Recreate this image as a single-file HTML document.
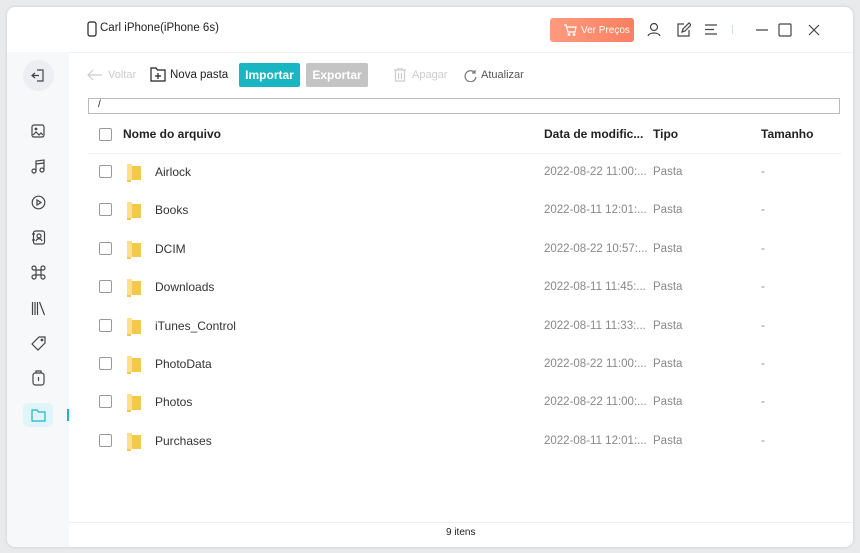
<!DOCTYPE html>
<html><head><meta charset="utf-8"><style>
*{margin:0;padding:0;box-sizing:border-box}
body{width:860px;height:553px;background:#e9eaec;font-family:"Liberation Sans",sans-serif;position:relative;overflow:hidden;color:#222}
.win{position:absolute;left:7px;top:7px;width:846px;height:540px;background:#fff;border-radius:8px;box-shadow:0 0 3px rgba(0,0,0,.15);overflow:hidden}
.side{position:absolute;left:0;top:45px;width:62px;height:495px;background:#f7f8fa}
.abs{position:absolute}
.t{position:absolute;white-space:nowrap}
.cb{position:absolute;width:13px;height:13px;border:1px solid #999;border-radius:2px;background:#fff}
.g{font-size:11.5px;color:#888}
svg{position:absolute;fill:none;stroke:#444;stroke-width:1.2}
</style></head><body>
<div class="win">
<div class="side"></div>
<svg style="left:80px;top:14px" width="10" height="16" viewBox="0 0 10 16"><rect x="1" y="1" width="8" height="14" rx="2" stroke="#222"/></svg>
<div class="t" style="left:93px;top:15px;font-size:11.5px">Carl iPhone(iPhone 6s)</div>
<div class="abs" style="left:543px;top:11px;width:84px;height:24px;border-radius:3px;background:linear-gradient(90deg,#ff9b7d,#fa7f62)"></div>
<svg style="left:556px;top:17px" width="14" height="12" viewBox="0 0 14 12"><path d="M1 1h2l2 7h7l1-5H4" stroke="#fff"/><circle cx="6" cy="10.5" r=".8" stroke="#fff"/><circle cx="11" cy="10.5" r=".8" stroke="#fff"/></svg>
<div class="t" style="left:574px;top:18px;font-size:10px;color:#fff">Ver Preços</div>
<svg style="left:640px;top:15px" width="14" height="15" viewBox="0 0 14 15"><circle cx="7" cy="5" r="3.5"/><path d="M1 14c1-4 11-4 12 0"/></svg>
<svg style="left:669px;top:15px" width="15" height="15" viewBox="0 0 15 15"><path d="M8 2H2v12h11V8M6 10l1-3 6-6 2 2-6 6z"/></svg>
<svg style="left:697px;top:17px" width="14" height="11" viewBox="0 0 14 11"><path d="M1 1h12M1 5.5h9M1 10h12"/></svg>
<div class="abs" style="left:725px;top:18px;width:1px;height:9px;background:#cde"></div>
<svg style="left:748px;top:17px" width="14" height="12" viewBox="0 0 14 12"><path d="M1 6h12"/></svg>
<svg style="left:771px;top:16px" width="14" height="14" viewBox="0 0 14 14"><rect x="1" y="1" width="12" height="12" rx="1"/></svg>
<svg style="left:801px;top:17px" width="12" height="12" viewBox="0 0 12 12"><path d="M1 1l10 10M11 1L1 11"/></svg>
<div class="abs" style="left:62px;top:45px;width:784px;height:1px;background:#f0f0f2"></div>
<div class="abs" style="left:16px;top:53px;width:31px;height:31px;border-radius:50%;background:#eceef2"></div>
<svg style="left:24px;top:61px" width="15" height="15" viewBox="0 0 15 15"><path d="M6 2h6v11H6M1 7.5h7M4 5l-3 2.5L4 10"/></svg>
<svg style="left:24px;top:117px" width="14" height="14" viewBox="0 0 14 14"><rect x="1" y="1" width="12" height="12" rx="2"/><path d="M2 11l3-3 3 3 2-2 2 2"/><circle cx="5" cy="5" r=".8"/></svg>
<svg style="left:24px;top:152px" width="14" height="15" viewBox="0 0 14 15"><path d="M5 12V2l8-1v10"/><circle cx="3" cy="12" r="2"/><circle cx="11" cy="11" r="2"/><path d="M5 5l8-1"/></svg>
<svg style="left:24px;top:188px" width="15" height="15" viewBox="0 0 15 15"><circle cx="7.5" cy="7.5" r="6.3"/><path d="M6 5v5l4-2.5z"/></svg>
<svg style="left:24px;top:223px" width="15" height="15" viewBox="0 0 15 15"><rect x="2.5" y="1" width="11" height="13" rx="2"/><circle cx="8" cy="6" r="2"/><path d="M5 11c1-3 5-3 6 0M1 4h3M1 10h3"/></svg>
<svg style="left:24px;top:258px" width="15" height="15" viewBox="0 0 15 15"><path d="M5 5h5v5H5zM5 5H3a2 2 0 1 1 2-2zM10 5V3a2 2 0 1 1 2 2zM10 10h2a2 2 0 1 1-2 2zM5 10v2a2 2 0 1 1-2-2z"/></svg>
<svg style="left:24px;top:294px" width="15" height="15" viewBox="0 0 15 15"><path d="M1.5 1v13M4 1v13M6.5 1v13M8.5 1l5 13"/></svg>
<svg style="left:24px;top:329px" width="15" height="15" viewBox="0 0 15 15"><path d="M8 1h6v6l-7 7-6-6z"/><circle cx="11" cy="4" r=".8"/></svg>
<svg style="left:25px;top:363px" width="13" height="16" viewBox="0 0 13 16"><rect x="1" y="3" width="11" height="12" rx="2.5"/><path d="M4 3V1h5v2M6.5 7v4"/></svg>
<div class="abs" style="left:16px;top:396px;width:30px;height:24px;border-radius:5px;background:#e0f5f7"></div>
<svg style="left:24px;top:401px;stroke:#19b6c2" width="15" height="14" viewBox="0 0 15 14"><path d="M1 2h5l1.5 2H14v9H1z"/></svg>
<div class="abs" style="left:60px;top:402px;width:2px;height:12px;background:#19b6c2"></div>
<svg style="left:80px;top:62px;stroke:#ccc" width="16" height="12" viewBox="0 0 16 12"><path d="M15 6H1M6 1L1 6l5 5"/></svg>
<div class="t" style="left:101px;top:62px;font-size:11px;color:#ccc">Voltar</div>
<svg style="left:143px;top:60px;stroke:#222" width="16" height="15" viewBox="0 0 16 15"><path d="M1 1h5l1.5 2H15v11H1zM8 6v6M5 9h6"/></svg>
<div class="t" style="left:163px;top:62px;font-size:11.5px">Nova pasta</div>
<div class="abs" style="left:232px;top:56px;width:61px;height:24px;border-radius:2px;background:#19b6c2;color:#fff;font-size:12px;font-weight:bold;text-align:center;line-height:24px">Importar</div>
<div class="abs" style="left:299px;top:56px;width:62px;height:24px;border-radius:2px;background:#c4c4c4;color:#fff;font-size:12px;font-weight:bold;text-align:center;line-height:24px">Exportar</div>
<svg style="left:387px;top:61px;stroke:#ccc" width="12" height="14" viewBox="0 0 12 14"><path d="M0 2h12M4 2V0h4v2M1.5 2v11h9V2M4.5 5v6M7.5 5v6"/></svg>
<div class="t" style="left:405px;top:62px;font-size:11px;color:#ccc">Apagar</div>
<svg style="left:457px;top:62px;stroke:#777" width="13" height="13" viewBox="0 0 13 13"><path d="M11 4A5.5 5.5 0 1 0 12 8M11 1v3H8"/></svg>
<div class="t" style="left:474px;top:62px;font-size:11px;color:#555">Atualizar</div>
<div class="abs" style="left:81px;top:91px;width:752px;height:16px;border:1px solid #bbb"></div>
<div class="t" style="left:91px;top:92px;font-size:10px">/</div>
<div class="cb" style="left:92px;top:121px"></div>
<div class="t" style="left:116px;top:120px;font-size:12px;font-weight:bold">Nome do arquivo</div>
<div class="t" style="left:537px;top:120px;font-size:12px;font-weight:bold">Data de modific...</div>
<div class="t" style="left:646px;top:120px;font-size:12px;font-weight:bold">Tipo</div>
<div class="t" style="left:754px;top:120px;font-size:12px;font-weight:bold">Tamanho</div>
<div class="abs" style="left:81px;top:146px;width:753px;height:1px;background:#eee"></div>
<div id="rows"></div>
<div class="abs" style="left:62px;top:515px;width:784px;height:1px;background:#eee"></div>
<div class="t" style="left:439px;top:520px;font-size:10px">9 itens</div>
</div>
<script>
var d=[["Airlock","2022-08-22 11:00:..."],["Books","2022-08-11 12:01:..."],["DCIM","2022-08-22 10:57:..."],["Downloads","2022-08-11 11:45:..."],["iTunes_Control","2022-08-11 11:33:..."],["PhotoData","2022-08-22 11:00:..."],["Photos","2022-08-22 11:00:..."],["Purchases","2022-08-11 12:01:..."]];
var h="";d.forEach(function(r,i){var y=165+i*38.4;
h+='<div class="cb" style="left:92px;top:'+(y-7)+'px"></div>'+
'<svg style="left:119px;top:'+(y-10)+'px;stroke:none" width="16" height="21" viewBox="0 0 16 21"><path d="M1 2h5v2h9v14H5v2H1z" fill="#f2c94c"/><path d="M1 2h5v16H1z" fill="#ffe08a"/></svg>'+
'<div class="t" style="left:148px;top:'+(y-7)+'px;font-size:12px;color:#333">'+r[0]+'</div>'+
'<div class="t g" style="left:537px;top:'+(y-6)+'px">'+r[1]+'</div>'+
'<div class="t g" style="left:646px;top:'+(y-6)+'px">Pasta</div>'+
'<div class="t g" style="left:754px;top:'+(y-6)+'px">-</div>';});
document.getElementById("rows").innerHTML=h;
</script>
</body></html>
